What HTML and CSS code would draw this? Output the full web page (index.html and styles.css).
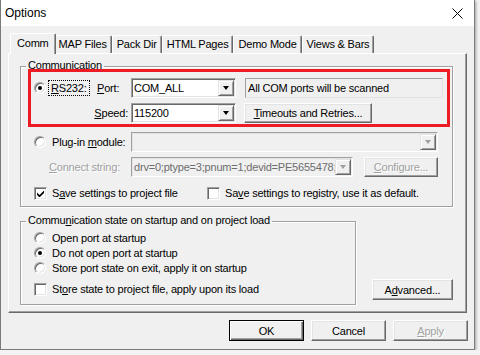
FILE: index.html
```html
<!DOCTYPE html>
<html lang="en">
<head>
  <meta charset="UTF-8">
  <title>Options</title>
  <link rel="stylesheet" href="styles.css">
</head>
<body>
  <div class="window">
    <header class="titlebar">
      <span class="title">Options</span>
      <svg class="close" width="11" height="11" viewBox="0 0 11 11">
        <path d="M0.5 0.5l10 10M10.5 0.5l-10 10" stroke="#000" stroke-width="1" fill="none"/>
      </svg>
    </header>

    <div class="client">
      <nav class="tabs">
        <span class="tab active">Comm</span>
        <span class="tab">MAP Files</span>
        <span class="tab">Pack Dir</span>
        <span class="tab">HTML Pages</span>
        <span class="tab">Demo Mode</span>
        <span class="tab">Views &amp; Bars</span>
      </nav>

      <section class="panel">
        <fieldset class="group comm">
          <legend>Communication</legend>

          <div class="highlight">
            <div class="line">
              <span class="choice rs"><span class="radio on"></span><span class="focus"><u>R</u>S232:</span></span>
              <span class="lbl port"><u>P</u>ort:</span>
              <span class="combo"><span class="val">COM_ALL</span><span class="drop"></span></span>
              <span class="info">All COM ports will be scanned</span>
            </div>
            <div class="line">
              <span class="lbl speed"><u>S</u>peed:</span>
              <span class="combo"><span class="val">115200</span><span class="drop"></span></span>
              <button class="btn timeouts"><u>T</u>imeouts and Retries...</button>
            </div>
          </div>

          <div class="line plugin">
            <span class="choice wide"><span class="radio"></span><span>Plug-in <u>m</u>odule:</span></span>
            <span class="combo off long"><span class="val"></span><span class="drop"></span></span>
          </div>

          <div class="line connect">
            <span class="lbl dim"><u>C</u>onnect string:</span>
            <span class="combo off mid"><span class="val">drv=0;ptype=3;pnum=1;devid=PE5655478;</span><span class="drop"></span></span>
            <button class="btn configure" disabled><u>C</u>onfigure...</button>
          </div>

          <div class="line checks">
            <span class="choice first">
              <span class="check"><svg width="7" height="7" viewBox="0 0 7 7"><path d="M0 2.5l2.5 2.5 4.5-4.5v2.5l-4.5 4.5-2.5-2.5z"/></svg></span>
              <span>S<u>a</u>ve settings to project file</span>
            </span>
            <span class="choice">
              <span class="check"></span>
              <span>Sa<u>v</u>e settings to registry, use it as default.</span>
            </span>
          </div>
        </fieldset>

        <div class="lower">
          <fieldset class="group state">
            <legend>Commu<u>n</u>ication state on startup and on project load</legend>
            <div class="opt"><span class="radio"></span><span>Open port at startup</span></div>
            <div class="opt"><span class="radio on"></span><span>Do not open port at startup</span></div>
            <div class="opt"><span class="radio"></span><span>Store port state on exit, apply it on startup</span></div>
            <div class="opt store"><span class="check"></span><span>St<u>o</u>re state to project file, apply upon its load</span></div>
          </fieldset>
          <button class="btn advanced">A<u>d</u>vanced...</button>
        </div>
      </section>

      <footer class="footer">
        <button class="btn default">OK</button>
        <button class="btn">Cancel</button>
        <button class="btn" disabled><u>A</u>pply</button>
      </footer>
    </div>
  </div>
</body>
</html>
```

FILE: styles.css
```css
* {
  box-sizing: border-box;
  margin: 0;
  padding: 0;
}

body {
  background: #f3f3f3;
  font: 11px "Liberation Sans", Arial, sans-serif;
  letter-spacing: -0.2px;
  color: #000;
}

.window {
  width: 475px;
  height: 350px;
  background: #f0f0f0;
  border: 1px solid #7a7a7a;
  border-top: none;
  box-shadow: 1px 1px 3px rgba(0, 0, 0, 0.35);
}

.titlebar {
  display: flex;
  align-items: center;
  height: 26px;
  padding: 0 11px 0 4px;
  background: #fff;
}

.title {
  font-size: 12px;
  letter-spacing: 0;
}

.close {
  margin-left: auto;
}

.client {
  padding: 7px 0 8px;
}

/* tabs */

.tabs {
  display: flex;
  align-items: flex-end;
  height: 20px;
  padding-left: 11px;
}

.tab {
  position: relative;
  height: 18px;
  padding: 0 4px;
  line-height: 16px;
  border: 1px solid;
  border-color: #fff #696969 transparent #fff;
  border-bottom: none;
  border-radius: 2px 2px 0 0;
  box-shadow: inset -1px 0 #a0a0a0;
  white-space: nowrap;
}

.tab.active {
  z-index: 1;
  height: 21px;
  margin: 0 -2px -1px;
  padding: 0 6px 2px;
  line-height: 18px;
  background: #f0f0f0;
}

.panel {
  height: 260px;
  margin: 0 7px;
  padding: 5px 0 0 11px;
  border: 1px solid;
  border-color: #fff #696969 #696969 #fff;
  box-shadow: inset -1px -1px #a0a0a0;
}

/* group boxes */

.group {
  border: 1px solid #a0a0a0;
  box-shadow: 1px 1px #fff, inset 1px 1px #fff;
  min-width: 0;
}

.group legend {
  margin-left: 5px;
  padding: 0 2px 3px;
  line-height: 12px;
  background: #f0f0f0;
}

.comm {
  width: 433px;
  padding-bottom: 5px;
}

.highlight {
  margin: -2px 5px 0 10px;
  padding: 6px 0 1px;
  outline: 3px solid #ed1c24;
  display: flex;
  flex-direction: column;
  gap: 5px;
}

.line {
  display: flex;
  align-items: center;
  height: 20px;
  padding-left: 3px;
  white-space: nowrap;
}

.comm > .line {
  margin-left: 10px;
}

.plugin {
  margin-top: 8px;
}

.connect {
  margin-top: 5px;
}

.checks {
  height: 16px;
  margin-top: 8px;
}

.choice {
  display: flex;
  align-items: center;
}

.rs {
  width: 59px;
}

.wide {
  width: 97px;
}

.first {
  width: 173px;
}

.lbl {
  display: block;
}

.port {
  width: 38px;
  padding-left: 4px;
}

.speed {
  width: 97px;
  padding-right: 3px;
  text-align: right;
}

.dim,
.btn:disabled {
  color: #a0a0a0;
  text-shadow: 1px 1px #fff;
}

.connect .dim {
  width: 97px;
  padding-left: 15px;
}

.focus {
  margin-left: -1px;
  padding: 0 1px;
  outline: 1px dotted #000;
  outline-offset: 1px;
}

/* radio and check */

.radio {
  position: relative;
  flex: none;
  width: 12px;
  height: 12px;
  margin-right: 6px;
  border: 1px solid;
  border-color: #a0a0a0 #fff #fff #a0a0a0;
  border-radius: 50%;
  box-shadow: inset 1px 1px #696969, inset -1px -1px #e3e3e3;
  background: #fff;
}

.rs .radio {
  margin-right: 5px;
}

.radio.on::after {
  content: "";
  position: absolute;
  left: 3px;
  top: 3px;
  width: 4px;
  height: 4px;
  border-radius: 50%;
  background: #000;
}

.check {
  display: flex;
  align-items: center;
  justify-content: center;
  flex: none;
  width: 13px;
  height: 13px;
  margin-right: 5px;
  border: 1px solid;
  border-color: #a0a0a0 #fff #fff #a0a0a0;
  box-shadow: inset 1px 1px #696969, inset -1px -1px #e3e3e3;
  background: #fff;
}

/* combo, field, buttons */

.combo {
  display: flex;
  width: 105px;
  height: 20px;
  border: 1px solid;
  border-color: #a0a0a0 #fff #fff #a0a0a0;
  box-shadow: inset 1px 1px #696969, inset -1px -1px #e3e3e3;
  background: #fff;
}

.combo .val {
  flex: 1;
  overflow: hidden;
  padding-left: 2px;
  line-height: 18px;
}

.drop {
  display: flex;
  align-items: center;
  justify-content: center;
  width: 16px;
  height: 16px;
  margin: 1px 1px 0 0;
  border: 1px solid;
  border-color: #e3e3e3 #696969 #696969 #e3e3e3;
  box-shadow: inset 1px 1px #fff, inset -1px -1px #a0a0a0;
  background: #f0f0f0;
}

.drop::after {
  content: "";
  border-style: solid;
  border-width: 4px 3.5px 0;
  border-color: #000 transparent transparent;
}

.combo.off {
  background: #f0f0f0;
  border-color: #a0a0a0 #fff #fff #a0a0a0;
  box-shadow: inset 1px 1px #e3e3e3;
  color: #6d6d6d;
}

.combo.off .drop::after {
  border-top-color: #a0a0a0;
}

.long {
  width: 307px;
}

.mid {
  width: 222px;
}

.info {
  width: 198px;
  height: 20px;
  margin-left: 9px;
  padding-left: 2px;
  line-height: 18px;
  border: 1px solid;
  border-color: #a0a0a0 #e3e3e3 #e3e3e3 #a0a0a0;
}

.btn {
  height: 21px;
  font: inherit;
  letter-spacing: inherit;
  color: #000;
  background: #f0f0f0;
  border: 1px solid;
  border-color: #fff #696969 #696969 #fff;
  box-shadow: inset -1px -1px #a0a0a0, inset 1px 1px #e3e3e3;
}

.timeouts {
  width: 128px;
  height: 20px;
  margin-left: 8px;
}

.configure {
  width: 74px;
  height: 20px;
  margin-left: 11px;
}

/* lower group */

.lower {
  display: flex;
  align-items: flex-end;
  margin-top: 7px;
}

.state {
  width: 336px;
  padding: 1px 0 7px;
}

.opt {
  display: flex;
  align-items: center;
  height: 15px;
  padding-left: 13px;
}

.opt.store {
  margin-top: 6px;
  height: 16px;
}

.advanced {
  width: 81px;
  margin: 0 0 5px 16px;
}

.footer {
  display: flex;
  justify-content: flex-end;
  gap: 7px;
  margin: 7px 6px 0 0;
}

.footer .btn {
  width: 75px;
}

.btn.default {
  border-color: #000;
  box-shadow: inset 1px 1px #fff, inset -1px -1px #696969, inset -2px -2px #a0a0a0;
}
```
